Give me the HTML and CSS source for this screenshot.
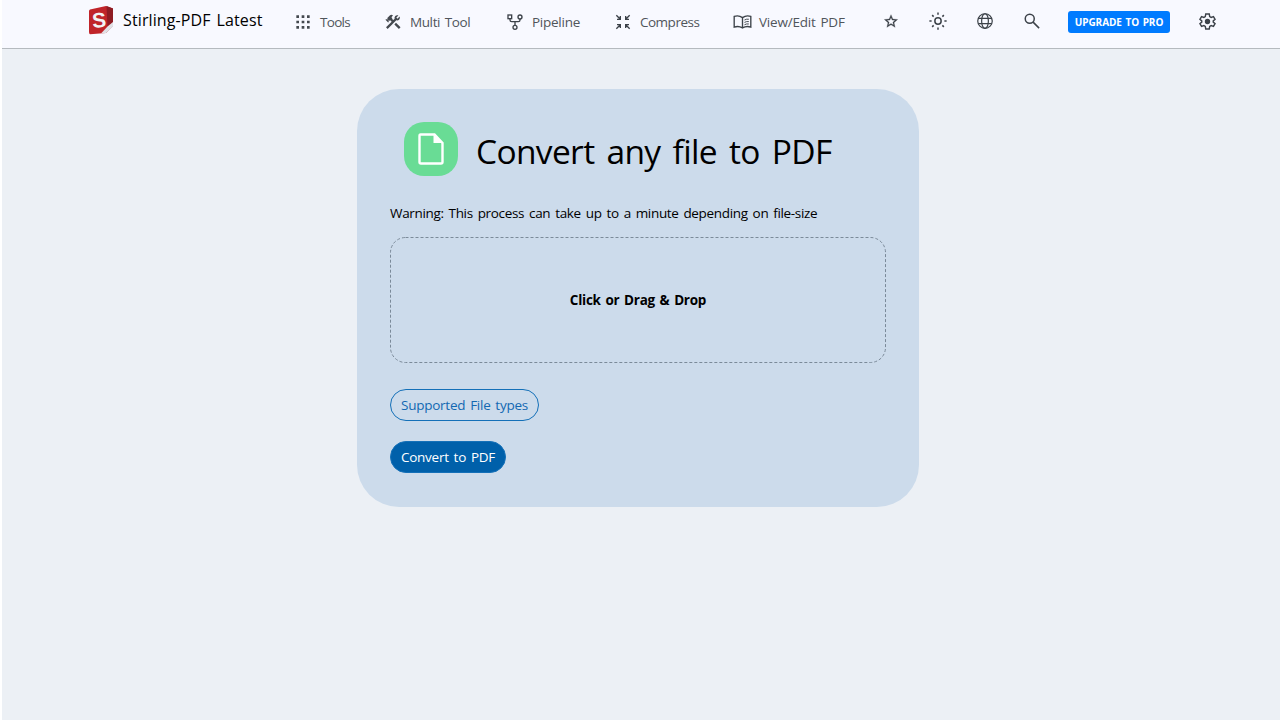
FILE: index.html
```html
<!DOCTYPE html>
<html lang="en">
<head>
<meta charset="utf-8">
<title>Convert any file to PDF</title>
<link rel="stylesheet" href="styles.css">
</head>
<body>
<nav class="navbar">
  <a class="brand">
    <svg class="logo" viewBox="0 0 26 30"><path d="M2 4.500 18 1l7 2.500v17.500L18 28 2 29.200Q1 29 1 27V6Q1 5 2 4.500z" fill="#c0242a"/><path d="M18.500 1 25 3.500V17l-5.500 4.500z" fill="#8e1c23"/><path d="M25 17v4.500L18 28l-5 .5 6.500-7z" fill="#dfe1e6"/><text class="logo-letter" x="4" y="22.500" transform="rotate(-5 11 15)">S</text></svg>
    <span class="brand-name">Stirling-PDF Latest</span>
  </a>
  <a class="nav-item"><svg class="icon" viewBox="0 0 24 24"><path d="M2 2h4v4H2zM10 2h4v4h-4zM18 2h4v4h-4zM2 10h4v4H2zM10 10h4v4h-4zM18 10h4v4h-4zM2 18h4v4H2zM10 18h4v4h-4zM18 18h4v4h-4z"/></svg><span class="t-tools">Tools</span></a>
  <a class="nav-item"><svg class="icon" viewBox="1.500 1.500 21 21"><path d="m13.783 15.172 2.121-2.121 5.996 5.996-2.121 2.121zM17.500 10c1.930 0 3.500-1.570 3.500-3.500 0-.580-.160-1.120-.410-1.600l-2.700 2.700-1.490-1.490 2.700-2.700c-.480-.250-1.020-.410-1.600-.410C15.570 3 14 4.570 14 6.500c0 .410.080.800.210 1.160l-1.850 1.850-1.780-1.780.71-.71-1.410-1.410L12 3.490a3 3 0 0 0-4.240 0L4.220 7.030l1.410 1.410H2.810l-.71.71 3.540 3.540.71-.71V9.150l1.410 1.410.71-.71 1.780 1.780-7.410 7.410 2.120 2.120L16.340 9.790c.360.130.750.210 1.160.210z"/></svg><span class="t-multi">Multi Tool</span></a>
  <a class="nav-item"><svg class="icon line" viewBox="0 0 24 24"><rect x="1.500" y="1.500" width="5.500" height="5.500"/><circle cx="19.500" cy="4.500" r="3"/><circle cx="12" cy="20" r="3"/><path d="M4.500 7v2q0 2.500 2.500 2.500h10q2.500 0 2.500-2.500V7.500M12 12v5"/></svg><span>Pipeline</span></a>
  <a class="nav-item"><svg class="icon line" viewBox="0 0 24 24"><path d="M3 8h5V3M8 8 2 2M16 3v5h5M16 8l6-6M3 16h5v5M8 16l-6 6M21 16h-5v5M16 16l6 6"/></svg><span class="t-comp">Compress</span></a>
  <a class="nav-item"><svg class="icon icon-book line" viewBox="0 0 24 20"><path d="M12 4.500Q7 .800 1.500 3v13.500Q7 14.500 12 17.500q5-3 10.500-1V3Q17 .800 12 4.500v13"/><path class="thin" d="M14.500 7.500q2.500-1.500 5.500-1M14.500 10.500q2.500-1.500 5.500-1M14.500 13.500q2.500-1.500 5.500-1"/></svg><span class="t-view">View/Edit PDF</span></a>
  <a class="nav-icon"><svg class="icon-star" viewBox="1.500 1.500 21 20"><path d="m22 9.240-7.190-.62L12 2 9.190 8.630 2 9.240l5.460 4.730L5.820 21 12 17.270 18.180 21l-1.630-7.030zM12 15.400l-3.760 2.270 1-4.280-3.320-2.880 4.380-.38L12 6.100l1.710 4.040 4.380.38-3.320 2.880 1 4.280z" stroke="#3c4249" stroke-width=".4"/></svg></a>
  <a class="nav-icon"><svg class="icon-lg line" viewBox="0 0 24 24"><circle cx="12" cy="12" r="4.200"/><path d="M12 .5v3M12 20.500v3M.5 12h3M20.500 12h3M4.200 4.200l2 2M17.800 17.800l2 2M4.200 19.800l2-2M17.800 6.200l2-2"/></svg></a>
  <a class="nav-icon"><svg class="icon-lg line globe" viewBox="0 0 24 24"><circle cx="12" cy="12" r="9.700"/><ellipse cx="12" cy="12" rx="4.500" ry="9.700"/><path d="M3 8.500h18M3 15.500h18"/></svg></a>
  <a class="nav-icon"><svg class="icon-lg line" viewBox="0 0 24 24"><circle cx="9" cy="9" r="6"/><path d="m13.500 13.500 8 8"/></svg></a>
  <a class="upgrade"><span>UPGRADE TO PRO</span></a>
  <a class="nav-icon"><svg class="icon-lg line gear" viewBox="0 0 24 24"><path d="M9.500 1.500h5l.6 3.500 2.100 1.200 3.200-1.200 2.300 4-2.600 2.200v1.600l2.600 2.200-2.300 4-3.200-1.200-2.100 1.200-.6 3.500h-5L8.900 19l-2.100-1.200L3.600 19l-2.300-4 2.600-2.200v-1.600L1.300 9l2.300-4 3.200 1.200L8.900 5z"/><circle class="solid" cx="12" cy="12" r="2.800"/></svg></a>
</nav>
<main class="page">
  <section class="card">
    <header class="card-head">
      <span class="badge"><svg class="file-icon" viewBox="0 0 26 32"><path d="M2.500 1.500h14l8 8.500v19q0 1.500-1.500 1.500H3q-1.500 0-1.500-1.500V3q0-1.500 1-1.500z" fill="none" stroke="#fff" stroke-width="2.400"/><path d="M15.500 1.500 24.500 10h-9z" fill="#fff"/></svg></span>
      <h1 class="title">Convert any file to PDF</h1>
    </header>
    <p class="warning">Warning: This process can take up to a minute depending on file-size</p>
    <div class="dropzone"><svg class="outline"><rect x=".5" y=".5" width="495" height="125" rx="15"/></svg><b class="drop-text">Click or Drag &amp; Drop</b></div>
    <button class="btn btn-outline"><span>Supported File types</span></button>
    <button class="btn btn-solid"><span>Convert to PDF</span></button>
  </section>
</main>
</body>
</html>
```
FILE: styles.css
```css
* { box-sizing: border-box; }
body {
  margin: 0;
  padding-left: 2px;
  height: 720px;
  overflow: hidden;
  background: #fff;
  color: #000;
  font-family: "Open Sans", "Noto Sans", sans-serif;
  font-size: 13.5px;
  white-space: nowrap;
}
.navbar {
  display: grid;
  grid-template-columns: 207px 90px 122px 108px 118px 151px 45px 47px 47px 45px 131px 20px;
  height: 49px;
  padding: 0 0 4px 86px;
  align-items: center;
  background: #f8f9ff;
  border-bottom: 1px solid #b5babf;
  color: #50555b;
}
.brand, .nav-item, .nav-icon { display: flex; align-items: center; }
.brand { gap: 9px; margin-top: -4px; }
.logo { width: 26px; height: 30px; }
.logo-letter { font: bold 21px "Liberation Sans", sans-serif; fill: #f2f3f5; }
.brand-name { color: #000; font-size: 16px; line-height: 24px; letter-spacing: .12px; word-spacing: 1.5px; }
.nav-item { gap: 9px; letter-spacing: -.25px; word-spacing: 1.5px; }
.t-tools { letter-spacing: -.7px; }
.t-multi { letter-spacing: -.4px; }
.t-comp { letter-spacing: -.5px; }
.t-view { letter-spacing: -.2px; margin-left: -2px; }
.icon { width: 16px; height: 16px; fill: #44494f; flex: none; }
.icon-book { width: 19px; height: 16px; }
.icon-star { width: 14px; height: 14px; fill: #3c4249; margin-top: -2px; }
.icon-lg { width: 18px; height: 18px; margin-top: -2px; }
.line { fill: none; stroke: #3c4249; stroke-width: 2; }
.icon-book { stroke-width: 1.7; }
.thin { stroke-width: 1.2; }
.globe { stroke-width: 1.6; }
.gear { width: 17px; height: 17px; }
.solid { fill: #3c4249; }
.upgrade {
  width: 102px;
  height: 22px;
  border-radius: 3px;
  display: flex;
  align-items: center;
  justify-content: center;
  background: #007bff;
  color: #fff;
  font-size: 10px;
  font-weight: 700;
  letter-spacing: -.05px;
  word-spacing: 1px;
}
.page { height: 671px; padding: 40px 0 0 355px; background: #ecf0f5; }
.card {
  width: 562px;
  height: 418px;
  padding: 33px;
  border-radius: 42px;
  background: #ccdbeb;
}
.card-head { display: flex; align-items: center; height: 54px; padding-left: 14px; gap: 18px; }
.badge {
  width: 54px;
  height: 54px;
  border-radius: 20px;
  background: #69dc95;
  display: flex;
  align-items: center;
  justify-content: center;
}
.file-icon { width: 26px; height: 32px; }
.title {
  margin: 3px 0 0;
  font-size: 33.5px;
  line-height: 50px;
  font-weight: 400;
  letter-spacing: -.65px;
  word-spacing: 4px;
}
.warning { margin: 26px 0 0; line-height: 22px; letter-spacing: -.33px; word-spacing: 1.7px; }
.dropzone {
  display: grid;
  place-items: center;
  height: 126px;
  margin: 13px 0 26px;
}
.dropzone > * { grid-area: 1 / 1; }
.outline { width: 496px; height: 126px; }
.outline rect { fill: none; stroke: #7b8a99; stroke-dasharray: 3 2; }
.drop-text { letter-spacing: -.25px; word-spacing: 1.4px; }
.btn {
  display: flex;
  align-items: center;
  justify-content: center;
  height: 32px;
  padding: 0;
  border: 1px solid #1470b8;
  border-radius: 16px;
  font: inherit;
  letter-spacing: -.25px;
  word-spacing: 1.6px;
}
.btn-outline { width: 149px; background: transparent; color: #1268b2; }
.btn-solid { width: 116px; margin-top: 20px; background: #0060aa; color: #fff; }
```
